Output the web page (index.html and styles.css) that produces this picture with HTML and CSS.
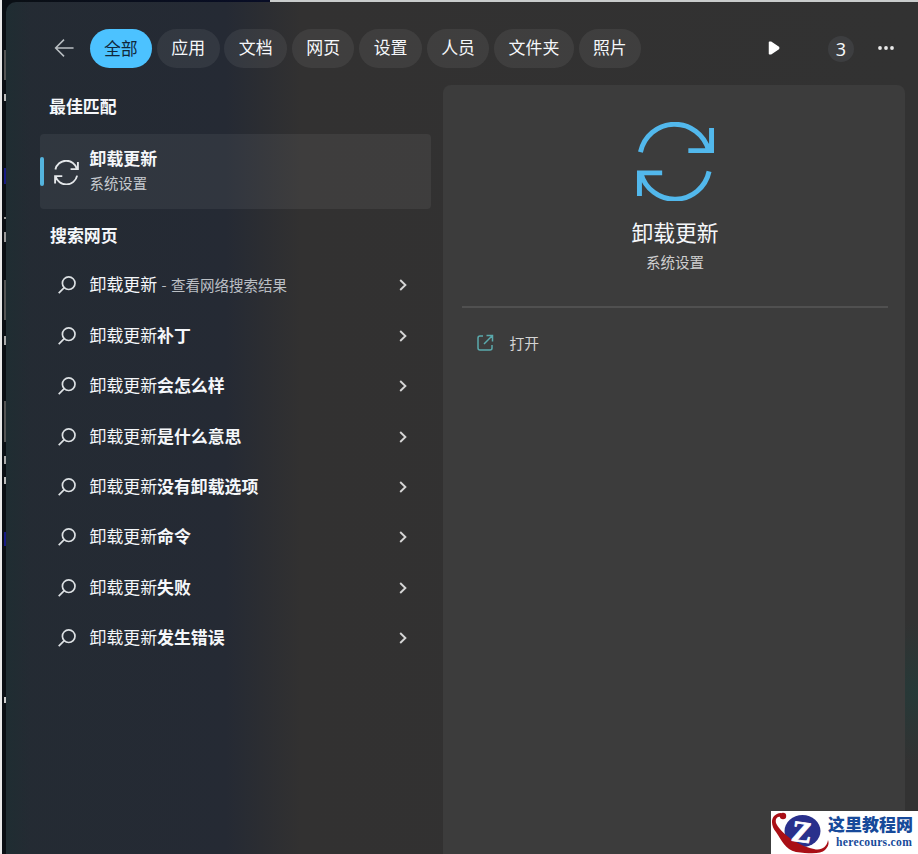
FILE: index.html
```html
<!DOCTYPE html>
<html lang="zh-CN">
<head>
    <meta charset="UTF-8">
    <title>搜索</title>
    <link rel="stylesheet" href="styles.css">
</head>
<body>
    <svg class="sprite" xmlns="http://www.w3.org/2000/svg">
        <symbol id="search" viewBox="0 0 20 20">
            <circle cx="11.7" cy="8.2" r="6.3" />
            <path d="M7.2 12.7L1.7 18.2" />
        </symbol>
        <symbol id="chevron" viewBox="0 0 8 12">
            <path d="M1.2 1L6.4 6L1.2 11" />
        </symbol>
        <symbol id="sync" viewBox="0 0 80 80">
            <path d="M4.5 30.5A35.5 35.5 0 0 1 73.5 28.5M76.5 6V29H53M74 50A35.5 35.5 0 0 1 5 52M3.5 75V51.5H26.5" />
        </symbol>
    </svg>

    <div class="search-window">
        <div class="topbar">
            <svg class="back" viewBox="0 0 22 20">
                <path d="M20.5 10H2M10.5 1.2L1.7 10L10.5 18.8" />
            </svg>
            <div class="tabs">
                <div class="tab active">全部</div>
                <div class="tab">应用</div>
                <div class="tab">文档</div>
                <div class="tab">网页</div>
                <div class="tab">设置</div>
                <div class="tab">人员</div>
                <div class="tab">文件夹</div>
                <div class="tab">照片</div>
            </div>
            <div class="actions">
                <svg class="play" viewBox="0 0 12 14">
                    <path d="M1.5 1.2H2.8L10.6 6.4V7.6L2.8 12.8H1.5Z" />
                </svg>
                <div class="points">3</div>
                <svg class="more" viewBox="0 0 18 6">
                    <circle cx="3" cy="3" r="1.9" />
                    <circle cx="9" cy="3" r="1.9" />
                    <circle cx="15" cy="3" r="1.9" />
                </svg>
            </div>
        </div>

        <div class="content">
            <div class="results">
                <h2>最佳匹配</h2>
                <div class="best-match">
                    <div class="marker"></div>
                    <svg class="sync-small"><use href="#sync" /></svg>
                    <div class="match-text">
                        <div class="match-title">卸载更新</div>
                        <div class="match-type">系统设置</div>
                    </div>
                </div>
                <h2 class="web-heading">搜索网页</h2>
                <ul class="suggestions">
                    <li>
                        <svg class="search-icon"><use href="#search" /></svg>
                        <span>卸载更新<small> - 查看网络搜索结果</small></span>
                        <svg class="chevron"><use href="#chevron" /></svg>
                    </li>
                    <li>
                        <svg class="search-icon"><use href="#search" /></svg>
                        <span>卸载更新<b>补丁</b></span>
                        <svg class="chevron"><use href="#chevron" /></svg>
                    </li>
                    <li>
                        <svg class="search-icon"><use href="#search" /></svg>
                        <span>卸载更新<b>会怎么样</b></span>
                        <svg class="chevron"><use href="#chevron" /></svg>
                    </li>
                    <li>
                        <svg class="search-icon"><use href="#search" /></svg>
                        <span>卸载更新<b>是什么意思</b></span>
                        <svg class="chevron"><use href="#chevron" /></svg>
                    </li>
                    <li>
                        <svg class="search-icon"><use href="#search" /></svg>
                        <span>卸载更新<b>没有卸载选项</b></span>
                        <svg class="chevron"><use href="#chevron" /></svg>
                    </li>
                    <li>
                        <svg class="search-icon"><use href="#search" /></svg>
                        <span>卸载更新<b>命令</b></span>
                        <svg class="chevron"><use href="#chevron" /></svg>
                    </li>
                    <li>
                        <svg class="search-icon"><use href="#search" /></svg>
                        <span>卸载更新<b>失败</b></span>
                        <svg class="chevron"><use href="#chevron" /></svg>
                    </li>
                    <li>
                        <svg class="search-icon"><use href="#search" /></svg>
                        <span>卸载更新<b>发生错误</b></span>
                        <svg class="chevron"><use href="#chevron" /></svg>
                    </li>
                </ul>
            </div>

            <div class="preview">
                <svg class="sync-large"><use href="#sync" /></svg>
                <div class="preview-title">卸载更新</div>
                <div class="preview-type">系统设置</div>
                <div class="open-row">
                    <svg class="open-icon" viewBox="0 0 18 18">
                        <path d="M7 2H4Q2 2 2 4V14Q2 16 4 16H14Q16 16 16 14V11M10.5 1.5H16.5V7.5M16.2 1.8L8 10" />
                    </svg>
                    <span>打开</span>
                </div>
            </div>
        </div>
    </div>

    <div class="watermark">
        <svg class="logo" viewBox="0 0 58 43">
            <ellipse cx="31.5" cy="20" rx="18" ry="16" fill="#29308c" />
            <path d="M10 2C-1 3 -1 14 5 21C11 30 14 38 25 41C40 43 50 43 54 39C58 35 58 32 57 29C56 36 50 40 43 38C26 35 8 20 5 12C4 8 6 5 10 6Z" fill="#a90f16" />
            <circle cx="12" cy="5" r="3.2" fill="#a90f16" />
            <text x="21" y="31" transform="rotate(8 31 20)">Z</text>
        </svg>
        <div class="site">
            <div class="site-name">这里教程网</div>
            <div class="site-url">herecours.com</div>
        </div>
    </div>
</body>
</html>
```
FILE: styles.css
```css
* {
    margin: 0;
    padding: 0;
    box-sizing: border-box;
}

body {
    width: 918px;
    height: 854px;
    overflow: hidden;
    padding: 2px 0 0 6px;
    background:
        linear-gradient(#e8e8e8, #e8e8e8) 0 0 / 2px 100% no-repeat,
        linear-gradient(#c9cccc, #c9cccc) 270px 0 / 648px 2px no-repeat,
        linear-gradient(#171b85, #171b85) 4px 168px / 2px 16px no-repeat,
        linear-gradient(#171b85, #171b85) 4px 532px / 2px 14px no-repeat,
        linear-gradient(#bbb, #bbb) 4px 94px / 2px 7px no-repeat,
        linear-gradient(#555, #555) 4px 50px / 2px 30px no-repeat,
        linear-gradient(#999, #999) 4px 217px / 2px 2px no-repeat,
        linear-gradient(#999, #999) 4px 232px / 2px 10px no-repeat,
        linear-gradient(#555, #555) 4px 280px / 2px 40px no-repeat,
        linear-gradient(#aaa, #aaa) 4px 336px / 2px 9px no-repeat,
        linear-gradient(#555, #555) 4px 401px / 2px 41px no-repeat,
        linear-gradient(#aaa, #aaa) 4px 456px / 2px 8px no-repeat,
        linear-gradient(#bbb, #bbb) 4px 477px / 2px 7px no-repeat,
        linear-gradient(#ccc, #ccc) 4px 697px / 2px 6px no-repeat,
        linear-gradient(90deg, #0a0f14 6px, #080d26 270px);
    color: #f5f7fa;
    font-family: 'Noto Sans CJK SC', sans-serif;
}

svg {
    display: block;
    flex: none;
    fill: none;
    stroke: currentColor;
}

.sprite {
    display: none;
}

.search-window {
    display: flex;
    flex-direction: column;
    height: 852px;
    border-radius: 10px 0 0 0;
    background:
        radial-gradient(circle at 912px 690px, rgba(30, 62, 60, 0.6), transparent 70px),
        linear-gradient(90deg, #1f2d32 0, rgba(31, 45, 50, 0) 24px),
        linear-gradient(90deg, #242b33 0, #252a34 220px, #2b2d32 255px, #323131 295px, #323232 100%);
}

.topbar {
    display: flex;
    align-items: center;
    height: 39px;
    margin: 27px 23px 17px 48px;
}

.back {
    width: 21px;
    height: 20px;
    margin-bottom: 2px;
    color: #b9bec2;
    stroke-width: 1.6;
}

.tabs {
    display: flex;
    gap: 4.9px;
    margin-left: 14.5px;
}

.tab {
    height: 39px;
    padding: 0 14.4px;
    border-radius: 20px;
    background: rgba(255, 255, 255, 0.065);
    font-size: 16.9px;
    line-height: 36px;
}

.tab.active {
    background: #4cc2ff;
    color: #10283b;
    line-height: 37px;
}

.actions {
    display: flex;
    align-items: center;
    margin-left: auto;
}

.play {
    width: 12px;
    height: 14px;
    margin-bottom: 1px;
    fill: #fff;
    stroke: #fff;
    stroke-width: 1.5;
    stroke-linejoin: round;
}

.points {
    width: 26px;
    height: 26px;
    margin: 0 23px 0 48px;
    border-radius: 50%;
    background: #3d3e40;
    font: 18px/26px 'Noto Sans', sans-serif;
    text-align: center;
}

.more {
    width: 18px;
    height: 6px;
    margin-bottom: 1px;
    fill: #e9e9e9;
    stroke: none;
}

.content {
    display: flex;
    flex: 1;
    justify-content: space-between;
    padding: 0 13px 0 34px;
}

.results {
    width: 391px;
}

h2 {
    margin: 9px 0 0 9px;
    font-size: 16.9px;
    font-weight: 700;
    line-height: 24px;
}

.best-match {
    display: flex;
    align-items: center;
    height: 75px;
    margin-top: 16px;
    border-radius: 4px;
    background: rgba(255, 255, 255, 0.06);
}

.marker {
    width: 4px;
    height: 29px;
    border-radius: 2px;
    background: #54b4de;
}

.sync-small {
    width: 25px;
    height: 25px;
    margin: 1px 10.5px 0 10px;
    color: #e4e7ea;
    stroke-width: 6;
}

.match-text {
    padding-bottom: 3px;
}

.match-title {
    font-size: 16.9px;
    font-weight: 700;
    line-height: 26px;
}

.match-type {
    color: #c6cacf;
    font-size: 14.4px;
    line-height: 24px;
}

.web-heading {
    margin: 14px 0 0 10px;
}

.suggestions {
    margin-top: 12.6px;
    list-style: none;
}

.suggestions li {
    display: flex;
    align-items: center;
    height: 50.43px;
    padding: 0 24px 0 17px;
    font-size: 16.9px;
}

.suggestions span {
    flex: 1;
    padding-bottom: 2px;
    white-space: nowrap;
}

.suggestions small {
    color: #bbbfc4;
    font-size: 14.5px;
    word-spacing: 1.2px;
}

.search-icon {
    width: 20px;
    height: 20px;
    margin: 1px 12.5px 0 0;
    color: #dce0e3;
    stroke-width: 1.7;
}

.chevron {
    width: 8px;
    height: 12px;
    margin-top: 1px;
    color: #d6d6d6;
    stroke-width: 1.9;
}

.preview {
    display: flex;
    flex-direction: column;
    align-items: center;
    width: 462px;
    padding: 37px 17px 0 19px;
    border-radius: 8px 8px 0 0;
    background: #3c3c3c;
}

.sync-large {
    width: 79px;
    height: 79px;
    color: #52b8ec;
    stroke-width: 5;
}

.preview-title {
    margin-top: 15px;
    font-size: 21.8px;
    line-height: 32px;
}

.preview-type {
    margin-top: 2px;
    color: #cfcfcf;
    font-size: 14.5px;
    line-height: 24px;
}

.open-row {
    display: flex;
    align-items: center;
    align-self: stretch;
    margin-top: 32px;
    padding: 22px 0 0 14px;
    border-top: 2px solid #505050;
    color: #d4d4d4;
    font-size: 14.8px;
    line-height: 26px;
}

.open-icon {
    width: 18px;
    height: 18px;
    margin: 0 15.5px 1px 0;
    color: #5aa9ac;
    stroke-width: 1.5;
}

/* sits on top of the window, bottom right */
.watermark {
    position: absolute;
    right: 0;
    bottom: 0;
    display: flex;
    width: 147px;
    height: 43px;
    background: #fff;
}

.logo {
    width: 58px;
    height: 43px;
    stroke: none;
}

.logo text {
    fill: #fff;
    stroke: #fff;
    stroke-width: 0.8px;
    font: bold 30px 'Liberation Serif', serif;
}

.site {
    color: #174a9a;
    white-space: nowrap;
}

.site-name {
    height: 26px;
    margin-left: -1px;
    font-size: 17px;
    font-weight: 900;
    line-height: 26px;
}

.site-url {
    margin-left: 7px;
    font: bold 11.6px/12px 'Liberation Serif', serif;
    letter-spacing: 0.3px;
}
```
